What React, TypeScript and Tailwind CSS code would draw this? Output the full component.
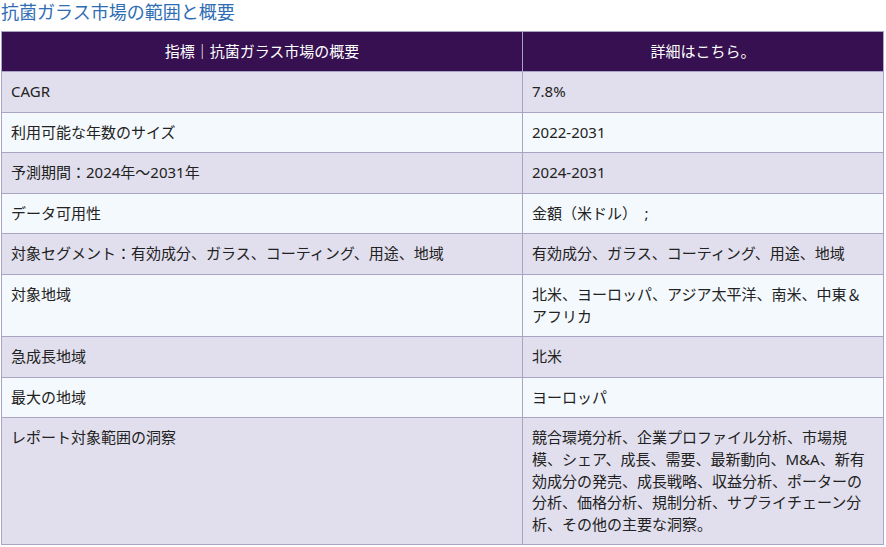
const rows: [string, string][] = [
  ["CAGR", "7.8%"],
  ["利用可能な年数のサイズ", "2022-2031"],
  ["予測期間：2024年～2031年", "2024-2031"],
  ["データ可用性", "金額（米ドル）　;"],
  ["対象セグメント：有効成分、ガラス、コーティング、用途、地域", "有効成分、ガラス、コーティング、用途、地域"],
  ["対象地域", "北米、ヨーロッパ、アジア太平洋、南米、中東＆アフリカ"],
  ["急成長地域", "北米"],
  ["最大の地域", "ヨーロッパ"],
  [
    "レポート対象範囲の洞察",
    "競合環境分析、企業プロファイル分析、市場規模、シェア、成長、需要、最新動向、M&A、新有効成分の発売、成長戦略、収益分析、ポーターの分析、価格分析、規制分析、サプライチェーン分析、その他の主要な洞察。",
  ],
];

export default function App() {
  return (
    <div
      className="w-[886px] h-[547px] bg-white overflow-hidden"
      style={{ fontFamily: '"Noto Sans", "Noto Sans CJK JP", sans-serif' }}
    >
      <h2 className="pl-[1px] text-[18px] leading-[24px] text-[#2f6db4] font-normal">
        抗菌ガラス市場の範囲と概要
      </h2>
      <table className="mt-[7px] ml-[1px] w-[883px] border-collapse text-[15px] leading-[21.6px] text-[#222]">
        <thead>
          <tr className="bg-[#361050] text-white">
            <th className="w-[521px] h-[40px] border border-[#aaa4c4] font-normal text-center">
              指標｜抗菌ガラス市場の概要
            </th>
            <th className="border border-[#aaa4c4] font-normal text-center">詳細はこちら。</th>
          </tr>
        </thead>
        <tbody>
          {rows.map(([k, v], i) => (
            <tr key={k} className={i % 2 === 0 ? "bg-[#e1dfed]" : "bg-[#f4f9fd]"}>
              <td className="align-top border border-[#aaa4c4] pl-[9px] pr-[9px] py-[9px]">{k}</td>
              <td className="align-top border border-[#aaa4c4] pl-[9px] pr-[11px] py-[9px]">{v}</td>
            </tr>
          ))}
        </tbody>
      </table>
    </div>
  );
}
